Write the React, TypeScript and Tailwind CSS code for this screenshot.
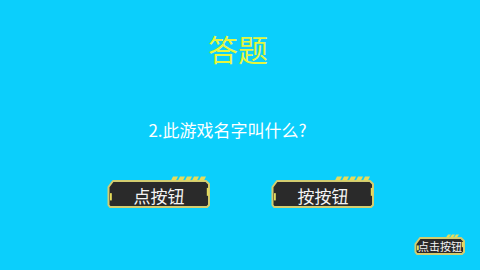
import React from "react";

const ButtonShape = ({ w, h }: { w: number; h: number }) => {
  // dark body with chamfered corners, yellow stripes on the top right
  const top = Math.round(h * 0.16);
  const sx = Math.round(w * 0.62);
  const step = w > 80 ? 7 : 4;
  const sw = w > 80 ? 5 : 3;
  const stripes = [];
  for (let x = sx; x + sw < w - 5; x += step) stripes.push(x);
  return (
    <svg
      className="absolute inset-0"
      width={w}
      height={h}
      viewBox={`0 0 ${w} ${h}`}
    >
      <polygon
        points={`6,${top} ${w - 5},${top} ${w - 2},${top + 3} ${w - 2},${h - 4} ${w - 4},${h - 2} 3,${h - 2} 1.5,${h - 4} 1.5,${top + 6}`}
        fill="#2a2a2a"
        stroke="#d3cd70"
        strokeWidth="2"
        strokeLinejoin="round"
      />
      {stripes.map((x) => (
        <polygon
          key={x}
          points={`${x + 2},0.5 ${x + 2 + sw},0.5 ${x + sw},${top - 0.5} ${x},${top - 0.5}`}
          fill="#e6dc5c"
        />
      ))}
      <rect x="3" y={h * 0.52} width="1.8" height={h * 0.22} fill="#e6dc5c" />
      <rect x={w - 4.2} y={h * 0.36} width="1.8" height={h * 0.24} fill="#e6dc5c" />
    </svg>
  );
};

const GameButton = ({
  label,
  w,
  h,
  size,
}: {
  label: string;
  w: number;
  h: number;
  size: string;
}) => (
  <div
    className="relative flex items-center justify-center"
    style={{ width: w, height: h }}
  >
    <ButtonShape w={w} h={h} />
    <span className={`relative text-[#f4f4f4] leading-none font-normal ${size}`}>
      {label}
    </span>
  </div>
);

export default function App() {
  return (
    <div
      className="w-[480px] h-[270px] bg-[#0bcffc] flex flex-col items-center overflow-hidden"
      style={{ fontFamily: '"Noto Sans CJK SC", "Noto Sans", sans-serif' }}
    >
      <h1 className="pt-[33px] ml-[-4px] text-[30px] leading-none text-[#e4f63f] font-normal">
        答题
      </h1>
      <p className="mt-[58px] ml-[-25px] text-[17px] leading-none text-white">
        2.此游戏名字叫什么?
      </p>
      <div className="mt-[38px] ml-[2px] flex gap-[60px]">
        <GameButton label="点按钮" w={104} h={33} size="text-[17px] pt-[5px]" />
        <GameButton label="按按钮" w={104} h={33} size="text-[17px] pt-[5px]" />
      </div>
      <div className="mt-auto w-full flex justify-end pr-[14px] pb-[14px]">
        <GameButton label="点击按钮" w={52} h={22} size="text-[11px] pt-[3px]" />
      </div>
    </div>
  );
}
